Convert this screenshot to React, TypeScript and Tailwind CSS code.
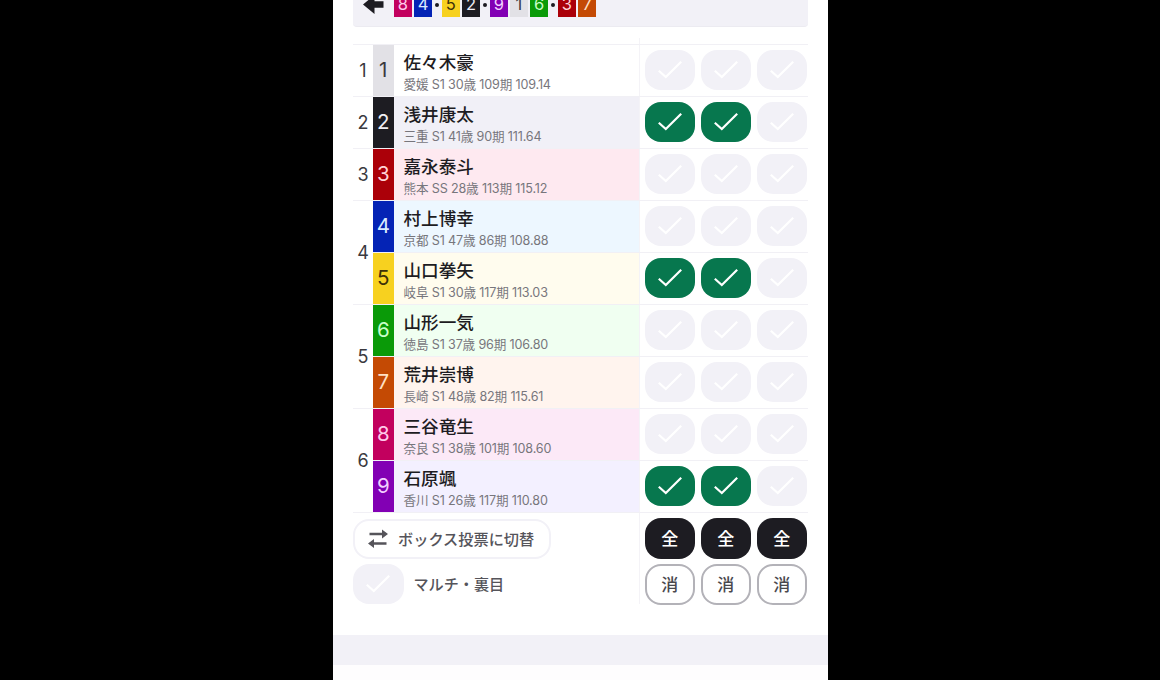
import clsx from "clsx";

type Rider = {
  no: number;
  name: string;
  info: string;
  bg: string;
  picks: boolean[];
};

const NONE = [false, false, false];
const FIRST_TWO = [true, true, false];

const CAR_COLORS: Record<number, string> = {
  1: "bg-[#e2e1e6] text-[#3a393e]",
  2: "bg-[#1d1c22] text-[#efeef4]",
  3: "bg-[#ab0009] text-[#ffd3d6]",
  4: "bg-[#0423b5] text-[#d9ecff]",
  5: "bg-[#f7d11f] text-[#3d3008]",
  6: "bg-[#0a9a08] text-[#c8ffc8]",
  7: "bg-[#c44a04] text-[#ffe0c4]",
  8: "bg-[#c2005e] text-[#ffc8ea]",
  9: "bg-[#8200b4] text-[#f2d0ff]",
};

// riders grouped by bracket number
const BRACKETS: Rider[][] = [
  [{ no: 1, name: "佐々木豪", info: "愛媛 S1 30歳 109期 109.14", bg: "bg-white", picks: NONE }],
  [{ no: 2, name: "浅井康太", info: "三重 S1 41歳 90期 111.64", bg: "bg-[#f1f0f7]", picks: FIRST_TWO }],
  [{ no: 3, name: "嘉永泰斗", info: "熊本 SS 28歳 113期 115.12", bg: "bg-[#fee9f0]", picks: NONE }],
  [
    { no: 4, name: "村上博幸", info: "京都 S1 47歳 86期 108.88", bg: "bg-[#edf7ff]", picks: NONE },
    { no: 5, name: "山口拳矢", info: "岐阜 S1 30歳 117期 113.03", bg: "bg-[#fffcee]", picks: FIRST_TWO },
  ],
  [
    { no: 6, name: "山形一気", info: "徳島 S1 37歳 96期 106.80", bg: "bg-[#f0fff1]", picks: NONE },
    { no: 7, name: "荒井崇博", info: "長崎 S1 48歳 82期 115.61", bg: "bg-[#fff4ee]", picks: NONE },
  ],
  [
    { no: 8, name: "三谷竜生", info: "奈良 S1 38歳 101期 108.60", bg: "bg-[#fce9f7]", picks: NONE },
    { no: 9, name: "石原颯", info: "香川 S1 26歳 117期 110.80", bg: "bg-[#f3f0ff]", picks: FIRST_TWO },
  ],
];

const LINES = [[8, 4], [5, 2], [9, 1, 6], [3, 7]];

function CheckButton({ on = false }: { on?: boolean }) {
  return (
    <button
      className={clsx(
        "flex h-[40.5px] w-[50.5px] shrink-0 items-center justify-center rounded-[16px]",
        on ? "bg-[#07774e]" : "bg-[#f2f1f7]"
      )}
    >
      <svg width="26" height="20" viewBox="0 0 26 20" fill="none" stroke="white" strokeWidth="2.2">
        <path d="M1.8 10.8 8.8 17 24.2 1.8" />
      </svg>
    </button>
  );
}

function LineUp() {
  return (
    <div className="mr-5 ml-[20.5px] flex h-[27px] items-end rounded-b-[4px] border-b border-[#ecebf1] bg-[#f2f1f7] pb-[9px] pl-[10px]">
      <svg className="mr-[10px] mb-[3px]" width="21" height="19" viewBox="0 0 21 19" fill="#1d1c22">
        <path d="M0 9.5 11.5 0v6.2H20.5v6.6H11.5V19z" />
      </svg>
      {LINES.map((line, i) => (
        <div key={i} className="flex items-end">
          {i > 0 && <span className="mx-[2.8px] mb-[10px] size-[4.5px] rounded-full bg-[#1d1c22]" />}
          <div className="flex gap-[2.5px]">
            {line.map((no) => (
              <span
                key={no}
                className={clsx("flex h-[26px] w-[17.7px] items-center justify-center text-[16.5px] leading-none", CAR_COLORS[no])}
              >
                {no}
              </span>
            ))}
          </div>
        </div>
      ))}
    </div>
  );
}

function RiderRow({ rider }: { rider: Rider }) {
  return (
    <div className="flex h-[52px] border-t border-[#f1f0f5]">
      <div className={clsx("flex w-[20.5px] items-center justify-center pb-px text-[20.5px] leading-none", CAR_COLORS[rider.no])}>
        {rider.no}
      </div>
      <div className={clsx("w-[245px] pl-[10px] pt-[6px]", rider.bg)}>
        <p className="text-[17.6px] font-medium leading-6 text-[#1d1c22]">{rider.name}</p>
        <p className="whitespace-nowrap pt-px text-[12.6px] leading-[18px] tracking-[-0.16px] text-[#77767c]">{rider.info}</p>
      </div>
      <div className="flex items-center gap-[5.5px] border-l border-[#f4f3f7] pb-px pl-[5px]">
        {rider.picks.map((on, i) => (
          <CheckButton key={i} on={on} />
        ))}
      </div>
    </div>
  );
}

function Footer() {
  return (
    <div className="flex h-[92px] border-t border-[#f1f0f5]">
      <div className="flex w-[285.5px] flex-col gap-[5px] pt-[6px]">
        <button className="flex h-10 w-[198px] items-center rounded-[16px] border-2 border-[#f2f1f7] pl-[13px] text-[15.2px] font-medium text-[#55545a]">
          <svg className="mr-[10px]" width="20" height="20" viewBox="0 0 20 20" fill="none" stroke="currentColor" strokeWidth="2.4">
            <path d="M1.5 5H15M5 14.5H18.5" />
            <path d="M14 .5 20 5 14 9.5zM6 10 0 14.5 6 19z" fill="currentColor" stroke="none" />
          </svg>
          <span className="whitespace-nowrap pt-[3px]">ボックス投票に切替</span>
        </button>
        <div className="flex items-center gap-[10px] text-[15.1px] font-medium text-[#55545a]">
          <CheckButton />
          <span className="pt-[3px]">マルチ・裏目</span>
        </div>
      </div>
      <div className="grid grid-cols-3 content-start gap-[5.5px] border-l border-[#f4f3f7] pl-[5px] pt-[5px]">
        {[0, 1, 2].map((i) => (
          <button key={i} className="h-[40.5px] w-[50.5px] rounded-[16px] bg-[#1d1c22] pt-[3px] text-[17px] font-medium text-white">
            全
          </button>
        ))}
        {[0, 1, 2].map((i) => (
          <button key={i} className="h-[40.5px] w-[50.5px] rounded-[16px] border-2 border-[#b3b2b8] bg-white pt-[3px] text-[17px] font-medium text-[#49484e]">
            消
          </button>
        ))}
      </div>
    </div>
  );
}

export default function App() {
  return (
    <div className="flex h-[680px] justify-center overflow-hidden bg-black font-[Inter,'Noto_Sans_CJK_JP',sans-serif]" lang="ja">
      <div className="flex w-[495px] flex-col bg-white">
        <LineUp />
        <div className="mr-5 ml-[20.5px] mt-[11px] flex h-[6px]">
          <div className="ml-[285.5px] border-l border-[#f4f3f7]" />
        </div>
        <div className="mr-5 ml-[20.5px]">
          {BRACKETS.map((riders, i) => (
            <div key={i} className="flex">
              <div className="flex w-5 items-center justify-center border-t border-[#f1f0f5] text-[18px] text-[#3a393e]">
                {i + 1}
              </div>
              <div className="flex-1">
                {riders.map((rider) => (
                  <RiderRow key={rider.no} rider={rider} />
                ))}
              </div>
            </div>
          ))}
          <Footer />
        </div>
        <div className="mt-[31px] h-[30px] bg-[#f2f1f7]" />
        <div className="flex-1 bg-[#fefdfe]" />
      </div>
    </div>
  );
}
